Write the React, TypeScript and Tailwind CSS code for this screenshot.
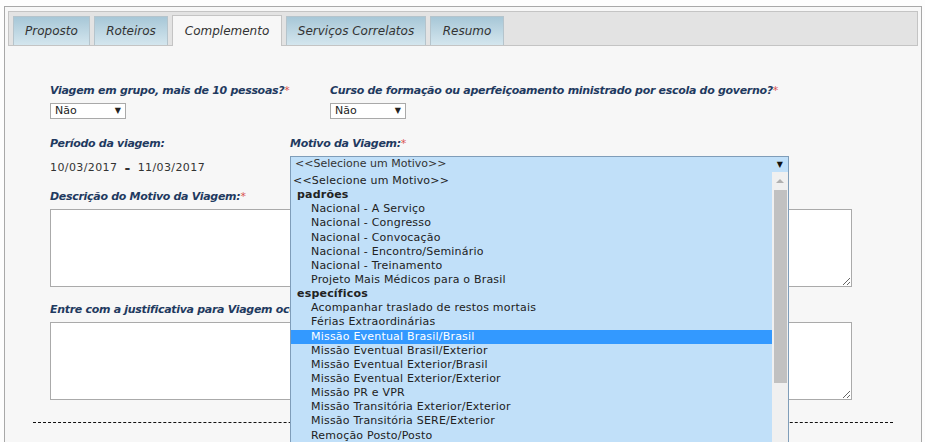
import React from "react";

const tabs = [
  { label: "Proposto", w: "w-[77px]" },
  { label: "Roteiros", w: "w-[74px]" },
  { label: "Complemento", w: "w-[110px]", active: true },
  { label: "Serviços Correlatos", w: "w-[140px]" },
  { label: "Resumo", w: "w-[74px]" },
];

const options: { text: string; kind: "opt" | "group" | "item"; selected?: boolean }[] = [
  { text: "<<Selecione um Motivo>>", kind: "opt" },
  { text: "padrões", kind: "group" },
  { text: "Nacional - A Serviço", kind: "item" },
  { text: "Nacional - Congresso", kind: "item" },
  { text: "Nacional - Convocação", kind: "item" },
  { text: "Nacional - Encontro/Seminário", kind: "item" },
  { text: "Nacional - Treinamento", kind: "item" },
  { text: "Projeto Mais Médicos para o Brasil", kind: "item" },
  { text: "específicos", kind: "group" },
  { text: "Acompanhar traslado de restos mortais", kind: "item" },
  { text: "Férias Extraordinárias", kind: "item" },
  { text: "Missão Eventual Brasil/Brasil", kind: "item", selected: true },
  { text: "Missão Eventual Brasil/Exterior", kind: "item" },
  { text: "Missão Eventual Exterior/Brasil", kind: "item" },
  { text: "Missão Eventual Exterior/Exterior", kind: "item" },
  { text: "Missão PR e VPR", kind: "item" },
  { text: "Missão Transitória Exterior/Exterior", kind: "item" },
  { text: "Missão Transitória SERE/Exterior", kind: "item" },
  { text: "Remoção Posto/Posto", kind: "item" },
];

const Label = ({ children, required }: { children: React.ReactNode; required?: boolean }) => (
  <div className="h-[14px] leading-[14px] text-[11px] tracking-[-0.3px] font-bold italic text-[#1f3a60] whitespace-nowrap">
    {children}
    {required && <span className="text-[#d9534f] font-normal">*</span>}
  </div>
);

const SmallSelect = () => (
  <div className="mt-[5px] w-[76px] h-[16px] border border-[#a9a9a9] bg-white flex items-center justify-between pl-[4px] pr-[4px] text-[11px] text-[#222]">
    <span>Não</span>
    <span className="text-[8px] leading-none">▼</span>
  </div>
);

export default function App() {
  return (
    <div className="w-[925px] h-[442px] overflow-hidden bg-[#fdfdfd] pt-[6px] pl-[4px] font-['DejaVu_Sans',Verdana,sans-serif]">
      <div className="w-[918px] h-[460px] border border-[#a8a8a8] bg-[#f7f7f7] relative">
        {/* tab bar */}
        <div className="mx-[3px] mt-[4px] h-[35px] border border-[#c4c4c4] bg-[#e3e3e3] flex items-end gap-[4px] pl-[4px]">
          {tabs.map((t) => (
            <div
              key={t.label}
              className={`${t.w} flex items-center justify-center italic text-[12px] text-[#333] border border-b-0 ${
                t.active
                  ? "h-[31px] -mb-px bg-[#f7f7f7] border-[#c4c4c4]"
                  : "h-[29px] border-[#b5c4cc] bg-gradient-to-b from-[#a7c7d7] to-[#d4e6ee]"
              }`}
            >
              {t.label}
            </div>
          ))}
        </div>

        {/* form */}
        <div className="pl-[45px] pt-[38px]">
          <div className="flex">
            <div className="w-[280px]">
              <Label required>Viagem em grupo, mais de 10 pessoas?</Label>
              <SmallSelect />
            </div>
            <div>
              <Label required>Curso de formação ou aperfeiçoamento ministrado por escola do governo?</Label>
              <SmallSelect />
            </div>
          </div>

          <div className="flex mt-[18px]">
            <div className="w-[240px]">
              <Label>Período da viagem:</Label>
              <div className="mt-[9px] text-[11px] tracking-[0.4px] text-[#333] flex items-center gap-[7px]">
                <span>10/03/2017</span>
                <span className="font-bold text-[14px] leading-none">-</span>
                <span>11/03/2017</span>
              </div>
            </div>
            <div>
              <Label required>Motivo da Viagem:</Label>
              <div className="mt-[5px] w-[499px] h-[17px] border border-[#7f9db9] bg-[#c1e0f9] flex items-center justify-between pl-[4px] pr-[5px] text-[11px] text-[#333]">
                <span>&lt;&lt;Selecione um Motivo&gt;&gt;</span>
                <span className="text-[8px] leading-none text-[#111]">▼</span>
              </div>
            </div>
          </div>

          <div className="mt-[13px]">
            <Label required>Descrição do Motivo da Viagem:</Label>
            <textarea
              readOnly
              className="block mt-[5px] w-[802px] h-[78px] border border-[#aaaaaa] bg-white"
            />
          </div>

          <div className="mt-[16px]">
            <div className="w-[240px] overflow-hidden">
              <Label>Entre com a justificativa para Viagem ocorrendo em final de semana ou feriado:</Label>
            </div>
            <textarea
              readOnly
              className="block mt-[5px] w-[802px] h-[78px] border border-[#aaaaaa] bg-white"
            />
          </div>
        </div>

        <div className="ml-[28px] mt-[22px] w-[860px] border-t border-dashed border-[#111]" />

        {/* open dropdown list */}
        <div className="absolute left-[285px] top-[165px] w-[499px] h-[290px] border-l border-r border-[#7f9db9] bg-[#c1e0f9] flex">
          <div className="flex-1 pt-[2px] text-[11px] tracking-[0.2px] text-[#222]">
            {options.map((o) => (
              <div
                key={o.text}
                className={`h-[14.15px] leading-[14px] whitespace-nowrap ${
                  o.kind === "group" ? "pl-[6px] font-bold" : o.kind === "item" ? "pl-[20px]" : "pl-[2px]"
                } ${o.selected ? "bg-[#3399ff] text-white" : ""}`}
              >
                {o.text}
              </div>
            ))}
          </div>
          <div className="w-[16px] bg-[#f0f0f0] flex flex-col items-center">
            <div className="h-[18px] flex items-center justify-center">
              <div className="w-0 h-0 border-l-[4px] border-r-[4px] border-b-[4px] border-l-transparent border-r-transparent border-b-[#b0b0b0]" />
            </div>
            <div className="w-[13px] h-[193px] bg-[#c1c1c1]" />
          </div>
        </div>
      </div>
    </div>
  );
}
